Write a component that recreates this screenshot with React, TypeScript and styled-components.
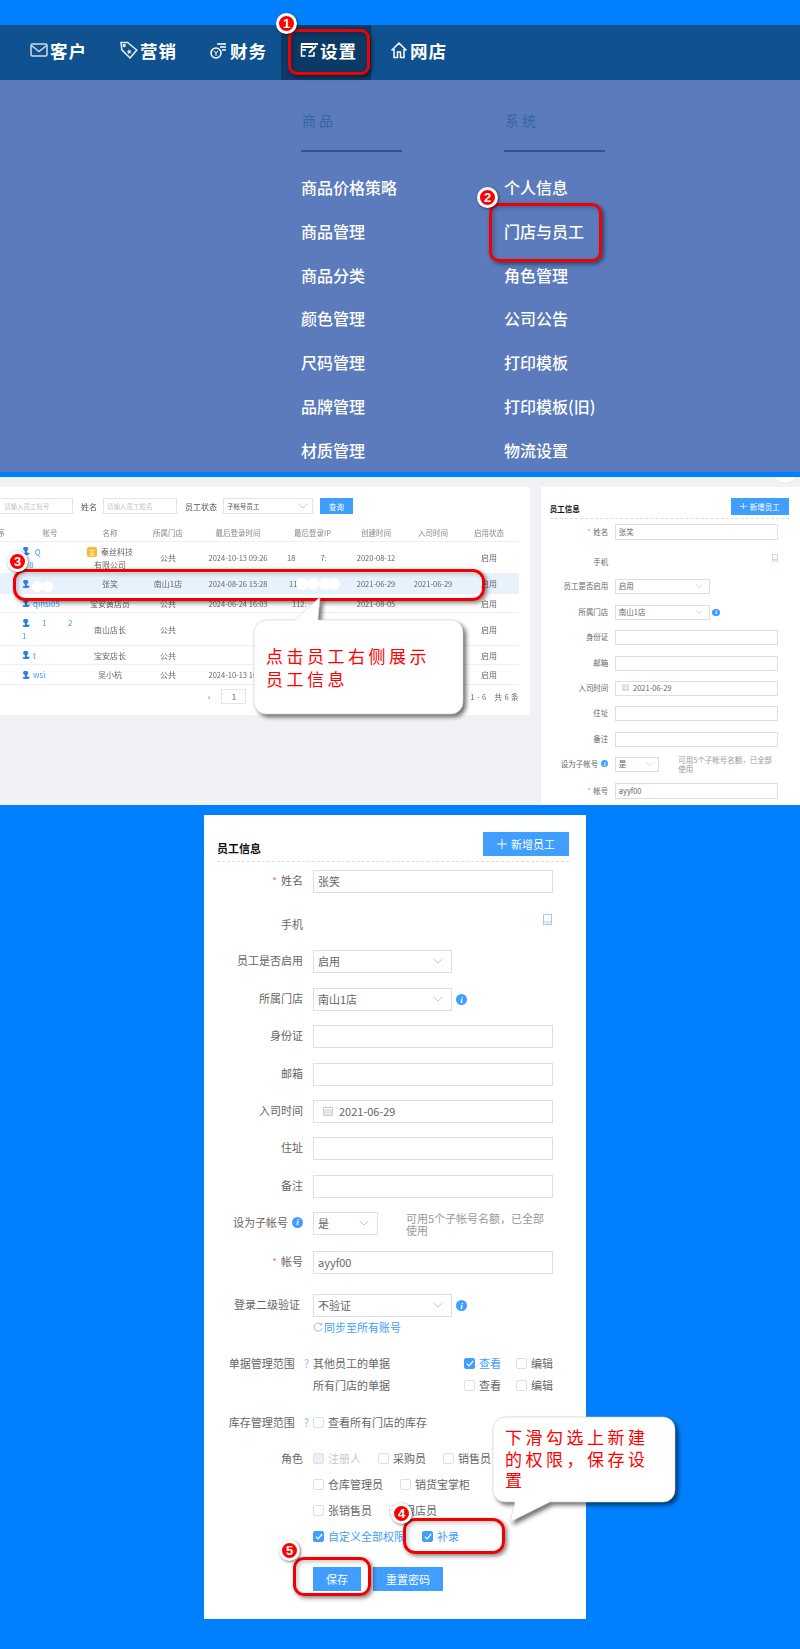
import React from 'react';
import styled, { createGlobalStyle } from 'styled-components';

const Global = createGlobalStyle`
  html, body { margin: 0; padding: 0; background: #0080ff; }
  body { font-family: "Noto Sans CJK SC", "Noto Sans", sans-serif; }
  * { box-sizing: border-box; }
`;

const Page = styled.div`
  position: relative;
  width: 800px;
  height: 1649px;
  overflow: hidden;
  background: #0080ff;
  padding-top: 25px;
`;

/* ---------- top navigation ---------- */
const Nav = styled.nav`
  display: flex;
  height: 55px;
  padding-left: 11px;
  background: #10528f;
`;
const NavItem = styled.div<{ $active?: boolean }>`
  display: flex;
  align-items: center;
  gap: 2px;
  padding: 0 14px 5px 19px;
  background: ${p => (p.$active ? '#0c3a66' : 'transparent')};
  color: #fff;
  font-size: 17.5px;
  font-weight: 700;
  letter-spacing: 1px;
  white-space: nowrap;
`;
const NavGlyph = styled.svg`
  width: 18px;
  height: 18px;
  flex: none;
  fill: none;
  stroke: #fff;
  stroke-width: 1.5;
`;

const Dropdown = styled.div`
  display: grid;
  grid-template-columns: 203px 203px;
  height: 392px;
  padding: 30px 0 0 301px;
  overflow: hidden;
  background: #5b7bbc;
`;
const MenuColumn = styled.div`
  display: flex;
  flex-direction: column;
`;
const MenuTitle = styled.div`
  height: 20px;
  line-height: 20px;
  margin-bottom: 20px;
  padding-left: 1px;
  color: #3566a8;
  font-size: 14px;
  letter-spacing: 3px;
`;
const MenuRule = styled.div`
  width: 101px;
  height: 2px;
  margin-bottom: 14px;
  background: #2a5794;
`;
const MenuLink = styled.div`
  height: 43.8px;
  line-height: 43.8px;
  color: #fff;
  font-size: 16px;
  font-weight: 500;
  white-space: nowrap;
`;

const Strip = styled.div<{ $h: number }>`
  height: ${p => p.$h}px;
`;

/* ---------- staff list ---------- */
const ListSection = styled.section`
  position: relative;
  display: flex;
  gap: 11px;
  height: 328px;
  padding-top: 10px;
  overflow: hidden;
  background: #f0f2f5;
`;
const CornerArc = styled.div`
  position: absolute;
  top: -18px;
  right: 3px;
  width: 24px;
  height: 24px;
  border-radius: 50%;
  background: #fff;
  box-shadow: 0 0 1px #bbb;
`;
const ListCard = styled.div`
  flex: none;
  width: 530px;
  height: 228px;
  padding-top: 11px;
  overflow: hidden;
  background: #fff;
  color: #666;
  font-size: 8px;
  filter: blur(0.3px);
`;
const FilterBar = styled.div`
  display: flex;
  align-items: center;
  height: 16px;
  margin-left: -20px;
`;
const FilterLabel = styled.span`
  margin: 0 6px 0 8px;
  color: #555;
  white-space: nowrap;
`;
const FilterBox = styled.div<{ $w: number; $muted?: boolean; $pl?: number }>`
  display: flex;
  align-items: center;
  justify-content: space-between;
  width: ${p => p.$w}px;
  height: 16px;
  padding: 0 4px 0 ${p => p.$pl ?? 3}px;
  border: 1px solid #e2e5ea;
  color: ${p => (p.$muted ? '#c0c4cc' : '#555')};
  font-size: 6.5px;
  white-space: nowrap;
`;
const QueryButton = styled.div`
  display: flex;
  align-items: center;
  justify-content: center;
  width: 33px;
  height: 16px;
  margin-left: 7px;
  background: #409eff;
  color: #fff;
  font-size: 7.5px;
`;
const TableRow = styled.div<{ $h: number; $on?: boolean; $head?: boolean }>`
  display: grid;
  grid-template-columns: 20px 60px 60px 56px 84px 65px 62px 52px 60px;
  align-items: center;
  width: 519px;
  height: ${p => p.$h}px;
  padding-top: ${p => (p.$head ? 9 : 0)}px;
  background: ${p => (p.$on ? '#e8f2fc' : 'transparent')};
  border-bottom: 1px solid #eef0f3;
  color: ${p => (p.$head ? '#888' : '#666')};
  font-size: ${p => (p.$head ? 7.5 : 8)}px;
  text-align: center;
`;
const Cell = styled.div`
  line-height: 13px;
  white-space: pre;
`;
const NumCell = styled(Cell)`
  font-size: 7.5px;
`;
const IpCell = styled(NumCell)<{ $pl: number }>`
  padding-left: ${p => p.$pl}px;
  text-align: left;
`;
const CutCell = styled(Cell)`
  margin-left: -18px;
`;
const AccountCell = styled.div`
  display: flex;
  flex-direction: column;
  gap: 4px;
  padding-left: 2px;
  color: #409eff;
  line-height: 9px;
  text-align: left;
  white-space: pre;
`;
const AccountLine = styled.div`
  display: flex;
  align-items: center;
  gap: 3px;
`;
const PersonGlyph = styled.svg`
  width: 8px;
  height: 8px;
  flex: none;
  fill: #2f7fe0;
`;
const OwnerBadge = styled.span`
  display: inline-block;
  width: 10px;
  height: 10px;
  margin-right: 4px;
  border-radius: 2px;
  background: #fbb62c;
  color: #fff;
  font-size: 7px;
  line-height: 10px;
  text-align: center;
`;
const Pager = styled.div`
  display: flex;
  align-items: center;
  width: 519px;
  height: 16px;
  margin-top: 3px;
  padding-left: 208px;
`;
const PagerBox = styled.div`
  display: flex;
  align-items: center;
  justify-content: center;
  width: 25px;
  height: 15px;
  margin-left: 11px;
  border: 1px solid #e2e5ea;
`;
const PagerTotal = styled.div`
  margin-left: auto;
  font-size: 7.5px;
  letter-spacing: 0.4px;
`;
const SidePanel = styled.div`
  flex: none;
  height: 318px;
  overflow: hidden;
  filter: blur(0.3px);
`;
const SideScale = styled.div`
  zoom: 0.68;
`;

/* ---------- staff form ---------- */
const FormSection = styled.section`
  display: flex;
  padding-left: 204px;
`;
const FormCard = styled.div`
  width: 382px;
  height: 804px;
  padding: 18px 17px 0 13px;
  background: #fff;
  color: #666;
  font-size: 11px;
`;
const FormHead = styled.div`
  display: flex;
  align-items: flex-end;
  justify-content: space-between;
  height: 29px;
  padding-bottom: 5px;
  border-bottom: 1px dashed #dcdcdc;
`;
const FormTitle = styled.div`
  color: #111;
  font-weight: 700;
  line-height: 16px;
`;
const AddButton = styled.div`
  display: flex;
  align-items: center;
  justify-content: center;
  gap: 4px;
  width: 86px;
  height: 24px;
  padding-bottom: 1px;
  background: #409eff;
  color: #fff;
`;
const Row = styled.div<{ $mt: number; $h?: number }>`
  display: grid;
  grid-template-columns: 86px 240px;
  column-gap: 10px;
  align-items: center;
  min-height: ${p => p.$h ?? 23}px;
  margin-top: ${p => p.$mt}px;
`;
const Label = styled.div<{ $shift?: number }>`
  display: flex;
  align-items: center;
  justify-content: flex-end;
  gap: 4px;
  margin-left: -10px;
  margin-right: ${p => p.$shift ?? 0}px;
  padding-bottom: 3px;
  color: #666;
  white-space: nowrap;
`;
const RoleLabel = styled(Label)`
  align-self: start;
  height: 26px;
`;
const Star = styled.span`
  color: #f56c6c;
  font-size: 10px;
`;
const Help = styled.span`
  margin-left: 5px;
  color: #8fbcf5;
  font-size: 11px;
`;
const TextBox = styled.div`
  display: flex;
  align-items: center;
  gap: 6px;
  height: 23px;
  padding: 0 4px 2px;
  border: 1px solid #dcdfe6;
  color: #666;
`;
const DateBox = styled(TextBox)`
  padding-left: 9px;
`;
const SelectBox = styled.div<{ $w: number }>`
  display: flex;
  align-items: center;
  justify-content: space-between;
  width: ${p => p.$w}px;
  height: 23px;
  padding: 0 8px 2px 4px;
  border: 1px solid #dcdfe6;
  color: #666;
`;
const Inline = styled.div`
  display: flex;
  align-items: center;
  gap: 4px;
`;
const InfoDot = styled.span`
  display: inline-flex;
  align-items: center;
  justify-content: center;
  width: 11px;
  height: 11px;
  flex: none;
  border-radius: 50%;
  background: #409eff;
  color: #fff;
  font-family: "Liberation Serif", serif;
  font-size: 9px;
  font-style: italic;
  font-weight: 700;
`;
const Hint = styled.div`
  width: 146px;
  margin: -2px 0 -2px 24px;
  color: #999;
  line-height: 12px;
`;
const PhoneSlot = styled.div`
  display: flex;
  justify-content: flex-end;
  padding: 0 1px 12px 0;
`;
const LineIcon = styled.svg`
  flex: none;
  fill: none;
`;
const SyncLink = styled.div`
  display: flex;
  align-items: center;
  gap: 1px;
  height: 18px;
  margin: 2px 0 0 96px;
  padding-bottom: 3px;
  color: #409eff;
`;
const ScopeLine = styled.div`
  display: flex;
  align-items: center;
  gap: 15px;
  padding-bottom: 3px;
`;
const ScopeName = styled.span`
  margin-right: auto;
`;
const Option = styled.span<{ $on?: boolean; $off?: boolean }>`
  display: inline-flex;
  align-items: center;
  gap: 4px;
  color: ${p => (p.$on ? '#409eff' : p.$off ? '#c0c8d4' : '#666')};
  white-space: nowrap;
`;
const Box = styled.span<{ $on?: boolean; $off?: boolean }>`
  display: inline-flex;
  align-items: center;
  justify-content: center;
  width: 11px;
  height: 11px;
  margin-top: 2px;
  border: 1px solid ${p => (p.$on ? '#409eff' : '#dcdfe6')};
  border-radius: 2px;
  background: ${p => (p.$on ? '#409eff' : p.$off ? '#eaf1fb' : '#fff')};
`;
const RoleRows = styled.div`
  display: flex;
  flex-direction: column;
`;
const RoleRow = styled.div`
  display: flex;
  align-items: center;
  gap: 17px;
  height: 26px;
  padding-bottom: 3px;
`;
const Actions = styled.div`
  display: flex;
  gap: 12px;
  margin: 17px 0 0 96px;
`;
const ActionButton = styled.div<{ $w: number }>`
  display: flex;
  align-items: center;
  justify-content: center;
  width: ${p => p.$w}px;
  height: 24px;
  padding-bottom: 1px;
  background: #409eff;
  color: #fff;
`;

/* ---------- tutorial marks laid over the screenshots ---------- */
const RedFrame = styled.div<{ $x: number; $y: number; $w: number; $h: number; $r: number }>`
  position: absolute;
  left: ${p => p.$x}px;
  top: ${p => p.$y}px;
  width: ${p => p.$w}px;
  height: ${p => p.$h}px;
  border: 3px solid #f00000;
  border-radius: ${p => p.$r}px;
  box-shadow: 2px 2px 4px rgba(0, 0, 0, 0.5), inset 2px 2px 4px rgba(0, 0, 0, 0.22);
`;
const Step = styled.div<{ $x: number; $y: number }>`
  position: absolute;
  left: ${p => p.$x}px;
  top: ${p => p.$y}px;
  display: flex;
  align-items: center;
  justify-content: center;
  width: 21px;
  height: 21px;
  border: 3px solid #fff;
  border-radius: 50%;
  background: #f00;
  box-shadow: 1px 1px 3px rgba(0, 0, 0, 0.55);
  color: #fff;
  font-family: "Liberation Sans", sans-serif;
  font-size: 13px;
  font-weight: 700;
`;
const Callout = styled.div<{ $x: number; $y: number; $w: number; $h: number }>`
  position: absolute;
  left: ${p => p.$x}px;
  top: ${p => p.$y}px;
  width: ${p => p.$w}px;
  height: ${p => p.$h}px;
`;
const CalloutShape = styled.svg`
  position: absolute;
  left: 0;
  top: 0;
  overflow: visible;
  filter: drop-shadow(3px 3px 2px rgba(0, 0, 0, 0.55));
`;
const CalloutText = styled.div<{ $l: number; $t: number; $w: number; $lh: number }>`
  position: absolute;
  left: ${p => p.$l}px;
  top: ${p => p.$t}px;
  width: ${p => p.$w}px;
  color: #f00;
  font-size: 17px;
  line-height: ${p => p.$lh}px;
  letter-spacing: 3.5px;
`;
const Smudge = styled.div<{ $x: number; $y: number; $s: number }>`
  position: absolute;
  left: ${p => p.$x}px;
  top: ${p => p.$y}px;
  width: ${p => p.$s}px;
  height: ${p => p.$s}px;
  border-radius: 50%;
  background: #fff;
  filter: blur(0.6px);
`;

/* ---------- small drawings ---------- */
const Chevron = () => (
  <LineIcon width="10" height="6" viewBox="0 0 10 6" stroke="#c4c8d0" strokeWidth="1">
    <path d="M.5.8 5 5l4.500-4.200" />
  </LineIcon>
);
const Check = () => (
  <LineIcon width="8" height="7" viewBox="0 0 8 7" stroke="#fff" strokeWidth="1.2">
    <path d="M.8 3.6 3 5.800 7.200 1" />
  </LineIcon>
);
const Person = () => (
  <PersonGlyph viewBox="0 0 8 8">
    <path d="M4.200 0a2 2 0 0 1 1.400 3.500c-.6.700-.9 1.400-.4 1.900.5.400 1.500.2 2.300.4v1.300L6 8H1.600L.2 6.600c.9-.4 2.200-.2 2.600-.9.300-.6-.2-1.400-.5-2.100A2 2 0 0 1 4.200 0Z" />
  </PersonGlyph>
);
const MailGlyph = () => (
  <NavGlyph viewBox="0 0 18 18" opacity="0.8">
    <rect x="1" y="3" width="16" height="12" rx="1.5" />
    <path d="m1.500 4.500 7.500 6 7.500-6" />
  </NavGlyph>
);
const TagGlyph = () => (
  <NavGlyph viewBox="0 0 18 18" opacity="0.9">
    <path d="M1 1.500h6.500L16.800 9 10 17 1.800 8.800Z" />
    <circle cx="4.200" cy="4.600" r="1" />
    <path d="m8.500 8.200 1.200 1.400 1.800-.2-1 1.500.8 1.600-1.700-.5-1.300 1.200-.1-1.800-1.600-.9 1.700-.6Z" fill="#fff" stroke="none" />
  </NavGlyph>
);
const FinanceGlyph = () => (
  <NavGlyph viewBox="0 0 18 18">
    <circle cx="6" cy="12" r="5" />
    <path d="m4 9.800 2 2.400 2-2.400M6 12.200V15" strokeWidth="1" />
    <path d="M7 3h9M10 6h6M12 9h4" strokeWidth="1.3" />
  </NavGlyph>
);
const SettingGlyph = () => (
  <NavGlyph viewBox="0 0 18 18">
    <path d="M1 3h17M1 6h12" strokeWidth="1.8" />
    <path d="M1.500 4v11h4M8 15h6V11M2 9h4" strokeWidth="1.5" />
    <path d="m9 12 7-7" strokeWidth="2" />
  </NavGlyph>
);
const HomeGlyph = () => (
  <NavGlyph viewBox="0 0 18 18" strokeWidth="2">
    <path d="M1.500 9.500 9 2l7.500 7.500M4 8v8.500h3.500V11h3v5.500H14V8" />
  </NavGlyph>
);

const goods = ['商品价格策略', '商品管理', '商品分类', '颜色管理', '尺码管理', '品牌管理', '材质管理'];
const system = ['个人信息', '门店与员工', '角色管理', '公司公告', '打印模板', '打印模板(旧)', '物流设置'];

const StaffForm = () => (
  <FormCard>
    <FormHead>
      <FormTitle>员工信息</FormTitle>
      <AddButton>
        <LineIcon width="10" height="10" viewBox="0 0 10 10" stroke="#fff" strokeWidth="1">
          <path d="M5 0v10M0 5h10" />
        </LineIcon>
        新增员工
      </AddButton>
    </FormHead>
    <Row $mt={8}>
      <Label><Star>*</Star>姓名</Label>
      <TextBox>张笑</TextBox>
    </Row>
    <Row $mt={21}>
      <Label>手机</Label>
      <PhoneSlot>
        <LineIcon width="9" height="11" viewBox="0 0 9 11" stroke="#a9c8f5" strokeWidth="1">
          <rect x=".5" y=".5" width="8" height="10" />
          <path d="M.5 8h8M4 9.300h1" />
        </LineIcon>
      </PhoneSlot>
    </Row>
    <Row $mt={13}>
      <Label>员工是否启用</Label>
      <SelectBox $w={139}>启用<Chevron /></SelectBox>
    </Row>
    <Row $mt={15}>
      <Label>所属门店</Label>
      <Inline>
        <SelectBox $w={139}>南山1店<Chevron /></SelectBox>
        <InfoDot>i</InfoDot>
      </Inline>
    </Row>
    <Row $mt={14}><Label>身份证</Label><TextBox /></Row>
    <Row $mt={15}><Label>邮箱</Label><TextBox /></Row>
    <Row $mt={14}>
      <Label>入司时间</Label>
      <DateBox>
        <LineIcon width="10" height="10" viewBox="0 0 10 10" stroke="#c8ccd4" strokeWidth="1">
          <path d="M.5 1.500h9v8h-9ZM.5 4h9M.5 6h9M.5 8h9M3 0v2M7 0v2" />
        </LineIcon>
        2021-06-29
      </DateBox>
    </Row>
    <Row $mt={14}><Label>住址</Label><TextBox /></Row>
    <Row $mt={15}><Label>备注</Label><TextBox /></Row>
    <Row $mt={14}>
      <Label>设为子帐号<InfoDot>i</InfoDot></Label>
      <Inline>
        <SelectBox $w={65}>是<Chevron /></SelectBox>
        <Hint>可用5个子帐号名额，已全部使用</Hint>
      </Inline>
    </Row>
    <Row $mt={16}>
      <Label><Star>*</Star>帐号</Label>
      <TextBox>ayyf00</TextBox>
    </Row>
    <Row $mt={20}>
      <Label $shift={3}>登录二级验证</Label>
      <Inline>
        <SelectBox $w={139}>不验证<Chevron /></SelectBox>
        <InfoDot>i</InfoDot>
      </Inline>
    </Row>
    <SyncLink>
      <LineIcon width="10" height="10" viewBox="0 0 10 10" stroke="#8fbcf5" strokeWidth="1">
        <path d="M8.500 3A4 4 0 1 0 9 6M8.800.8V3H6.700" />
      </LineIcon>
      同步至所有账号
    </SyncLink>
    <Row $mt={16} $h={22}>
      <Label $shift={-6}>单据管理范围<Help>?</Help></Label>
      <ScopeLine>
        <ScopeName>其他员工的单据</ScopeName>
        <Option $on><Box $on><Check /></Box>查看</Option>
        <Option><Box />编辑</Option>
      </ScopeLine>
    </Row>
    <Row $mt={0} $h={22}>
      <span />
      <ScopeLine>
        <ScopeName>所有门店的单据</ScopeName>
        <Option><Box />查看</Option>
        <Option><Box />编辑</Option>
      </ScopeLine>
    </Row>
    <Row $mt={15} $h={22}>
      <Label $shift={-6}>库存管理范围<Help>?</Help></Label>
      <ScopeLine>
        <Option><Box />查看所有门店的库存</Option>
      </ScopeLine>
    </Row>
    <Row $mt={12} $h={104}>
      <RoleLabel>角色</RoleLabel>
      <RoleRows>
        <RoleRow>
          <Option $off><Box $off />注册人</Option>
          <Option><Box />采购员</Option>
          <Option><Box />销售员</Option>
        </RoleRow>
        <RoleRow>
          <Option><Box />仓库管理员</Option>
          <Option><Box />销货宝掌柜</Option>
        </RoleRow>
        <RoleRow>
          <Option><Box />张销售员</Option>
          <Option><Box />跟店员</Option>
        </RoleRow>
        <RoleRow>
          <Option $on><Box $on><Check /></Box>自定义全部权限</Option>
          <Option $on><Box $on><Check /></Box>补录</Option>
        </RoleRow>
      </RoleRows>
    </Row>
    <Actions>
      <ActionButton $w={48}>保存</ActionButton>
      <ActionButton $w={70}>重置密码</ActionButton>
    </Actions>
  </FormCard>
);

const smudges = [
  [32, 581, 11], [42, 581, 11], [296, 578, 12], [307, 578, 12], [319, 578, 12], [328, 578, 12], [329, 601, 10],
];

export default function App() {
  return (
    <Page>
      <Global />
      <Nav>
        <NavItem><MailGlyph />客户</NavItem>
        <NavItem><TagGlyph />营销</NavItem>
        <NavItem><FinanceGlyph />财务</NavItem>
        <NavItem $active><SettingGlyph />设置</NavItem>
        <NavItem><HomeGlyph />网店</NavItem>
      </Nav>
      <Dropdown>
        <MenuColumn>
          <MenuTitle>商品</MenuTitle>
          <MenuRule />
          {goods.map(t => <MenuLink key={t}>{t}</MenuLink>)}
        </MenuColumn>
        <MenuColumn>
          <MenuTitle>系统</MenuTitle>
          <MenuRule />
          {system.map(t => <MenuLink key={t}>{t}</MenuLink>)}
        </MenuColumn>
      </Dropdown>
      <Strip $h={5} />
      <ListSection>
        <CornerArc />
        <ListCard>
          <FilterBar>
            <FilterBox $w={93} $muted $pl={23}>请输入员工帐号</FilterBox>
            <FilterLabel>姓名</FilterLabel>
            <FilterBox $w={74} $muted>请输入员工姓名</FilterBox>
            <FilterLabel>员工状态</FilterLabel>
            <FilterBox $w={90}>子帐号员工<Chevron /></FilterBox>
            <QueryButton>查询</QueryButton>
          </FilterBar>
          <TableRow $h={28} $head>
            <CutCell>序</CutCell><Cell>帐号</Cell><Cell>名称</Cell><Cell>所属门店</Cell><Cell>最后登录时间</Cell>
            <Cell>最后登录IP</Cell><Cell>创建时间</Cell><Cell>入司时间</Cell><Cell>启用状态</Cell>
          </TableRow>
          <TableRow $h={32}>
            <span />
            <AccountCell>
              <AccountLine><Person /> Q</AccountLine>
              <AccountLine>    8</AccountLine>
            </AccountCell>
            <Cell><OwnerBadge>主</OwnerBadge>秦丝科技{'\n'}有限公司</Cell>
            <Cell>公共</Cell><NumCell>2024-10-13 09:26</NumCell><IpCell $pl={7}>{'18               7:'}</IpCell><NumCell>2020-08-12</NumCell><Cell /><Cell>启用</Cell>
          </TableRow>
          <TableRow $h={20} $on>
            <span />
            <AccountCell><AccountLine><Person /></AccountLine></AccountCell>
            <Cell>张笑</Cell><Cell>南山1店</Cell><NumCell>2024-08-26 15:28</NumCell><IpCell $pl={9}>11</IpCell><NumCell>2021-06-29</NumCell><NumCell>2021-06-29</NumCell><Cell>启用</Cell>
          </TableRow>
          <TableRow $h={19}>
            <span />
            <AccountCell><AccountLine><Person />qinsi05</AccountLine></AccountCell>
            <Cell>宝安黄店员</Cell><Cell>公共</Cell><NumCell>2024-06-24 16:03</NumCell><IpCell $pl={12}>112.</IpCell><NumCell>2021-08-05</NumCell><Cell /><Cell>启用</Cell>
          </TableRow>
          <TableRow $h={33}>
            <span />
            <AccountCell>
              <AccountLine><Person />     1            2</AccountLine>
              <AccountLine>1</AccountLine>
            </AccountCell>
            <Cell>南山店长</Cell><Cell>公共</Cell><Cell /><Cell /><Cell /><Cell /><Cell>启用</Cell>
          </TableRow>
          <TableRow $h={19}>
            <span />
            <AccountCell><AccountLine><Person />t</AccountLine></AccountCell>
            <Cell>宝安店长</Cell><Cell>公共</Cell><Cell /><Cell /><Cell /><Cell /><Cell>启用</Cell>
          </TableRow>
          <TableRow $h={20}>
            <span />
            <AccountCell><AccountLine><Person />wsi</AccountLine></AccountCell>
            <Cell>吴小杭</Cell><Cell>公共</Cell><NumCell>2024-10-13 16:02</NumCell><Cell /><Cell /><Cell /><Cell>启用</Cell>
          </TableRow>
          <Pager>
            ‹
            <PagerBox>1</PagerBox>
            <PagerTotal>1 - 6　共 6 条</PagerTotal>
          </Pager>
        </ListCard>
        <SidePanel>
          <SideScale><StaffForm /></SideScale>
        </SidePanel>
      </ListSection>
      <Strip $h={10} />
      <FormSection><StaffForm /></FormSection>

      {smudges.map(([x, y, s]) => <Smudge key={`${x}-${y}`} $x={x} $y={y} $s={s} />)}

      <RedFrame $x={288} $y={29} $w={82} $h={46} $r={9} />
      <Step $x={276} $y={13}>1</Step>
      <RedFrame $x={489} $y={203} $w={113} $h={59} $r={10} />
      <Step $x={477} $y={187}>2</Step>
      <RedFrame $x={13} $y={569} $w={472} $h={32} $r={12} />
      <Step $x={7} $y={551}>3</Step>
      <Callout $x={254} $y={597} $w={209} $h={117}>
        <CalloutShape width="209" height="117" viewBox="0 0 209 117">
          <path d="M12 23h29L66 0l-2 23h133a12 12 0 0 1 12 12v70a12 12 0 0 1-12 12H12a12 12 0 0 1-12-12V35a12 12 0 0 1 12-12Z" fill="#fff" stroke="#d0d0d0" strokeWidth="0.6" />
        </CalloutShape>
        <CalloutText $l={12} $t={48} $w={170} $lh={22.5}>点击员工右侧展示员工信息</CalloutText>
      </Callout>

      <Callout $x={493} $y={1417} $w={182} $h={105}>
        <CalloutShape width="182" height="105" viewBox="0 0 182 105">
          <path d="M12 0h158a12 12 0 0 1 12 12v61a12 12 0 0 1-12 12H57L17 105l5-20H12A12 12 0 0 1 0 73V12A12 12 0 0 1 12 0Z" fill="#fff" stroke="#d0d0d0" strokeWidth="0.6" />
        </CalloutShape>
        <CalloutText $l={12} $t={9} $w={150} $lh={21.5}>下滑勾选上新建的权限，保存设置</CalloutText>
      </Callout>
      <RedFrame $x={403} $y={1518} $w={102} $h={36} $r={12} />
      <Step $x={391} $y={1503}>4</Step>
      <RedFrame $x={293} $y={1557} $w={78} $h={39} $r={11} />
      <Step $x={279} $y={1540}>5</Step>
    </Page>
  );
}
